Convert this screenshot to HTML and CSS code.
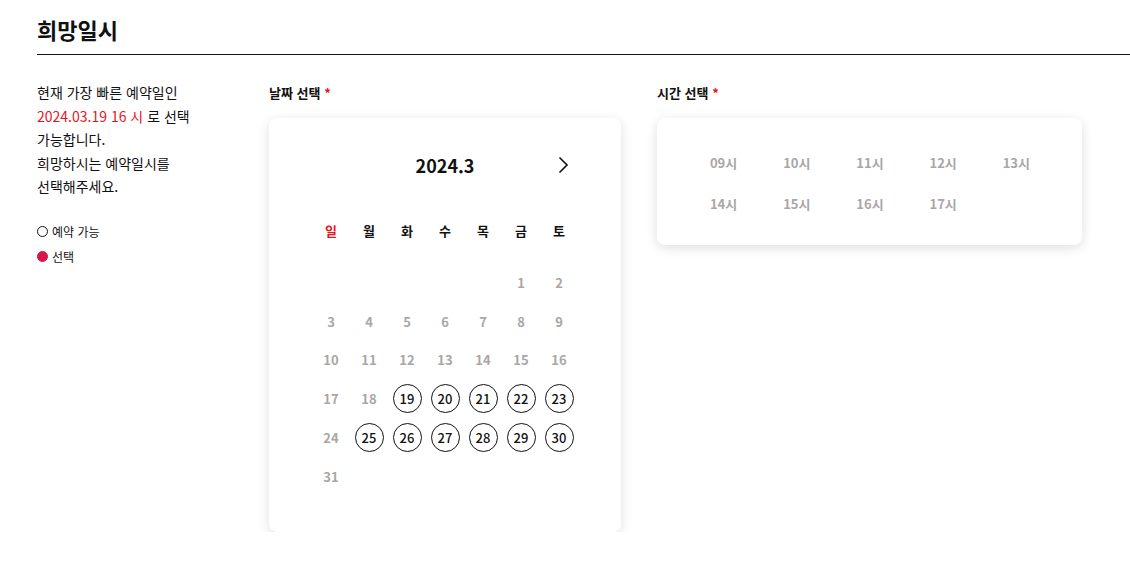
FILE: index.html
```html
<!DOCTYPE html>
<html lang="ko">
<head>
    <meta charset="UTF-8">
    <meta name="viewport" content="width=device-width, initial-scale=1.0">
    <title>희망일시</title>
    <link rel="stylesheet" href="styles.css">
</head>
<body>
    <div class="page">
        <h2 class="title">희망일시</h2>

        <div class="content">
            <div class="info">
                <p class="notice">
                    현재 가장 빠른 예약일인<br>
                    <span class="red">2024.03.19 16 시</span> 로 선택<br>
                    가능합니다.<br>
                    희망하시는 예약일시를<br>
                    선택해주세요.
                </p>
                <ul class="legend">
                    <li><span class="dot"></span>예약 가능</li>
                    <li><span class="dot on"></span>선택</li>
                </ul>
            </div><!--info-->

            <div class="col-date">
                <h3 class="label">날짜 선택 <span class="star">*</span></h3>
                <div class="card calendar">
                    <div class="cal-head">
                        <span></span>
                        <strong class="month">2024.3</strong>
                        <button class="next" aria-label="다음 달">
                            <svg width="20" height="20" viewBox="0 0 20 20"><path d="M6.5 2.5 L14 10 L6.5 17.5" fill="none" stroke="#111" stroke-width="1.6"/></svg>
                        </button>
                    </div>
                    <div class="week">
                        <span class="sun">일</span><span>월</span><span>화</span><span>수</span><span>목</span><span>금</span><span>토</span>
                    </div>
                    <div class="days">
                        <span></span><span></span><span></span><span></span><span></span>
                        <span>1</span><span>2</span>
                        <span>3</span><span>4</span><span>5</span><span>6</span><span>7</span><span>8</span><span>9</span>
                        <span>10</span><span>11</span><span>12</span><span>13</span><span>14</span><span>15</span><span>16</span>
                        <span>17</span><span>18</span><span class="able">19</span><span class="able">20</span><span class="able">21</span><span class="able">22</span><span class="able">23</span>
                        <span>24</span><span class="able">25</span><span class="able">26</span><span class="able">27</span><span class="able">28</span><span class="able">29</span><span class="able">30</span>
                        <span>31</span>
                    </div>
                </div><!--calendar-->
            </div>

            <div class="col-time">
                <h3 class="label">시간 선택 <span class="star">*</span></h3>
                <div class="card times">
                    <span>09시</span><span>10시</span><span>11시</span><span>12시</span><span>13시</span>
                    <span>14시</span><span>15시</span><span>16시</span><span>17시</span>
                </div>
            </div>
        </div><!--content-->
    </div>
</body>
</html>
```

FILE: styles.css
```css
body{
    margin: 0;
    background: #fff;
    color: #111;
    font-family: "Noto Sans CJK KR", "Noto Sans", sans-serif;
}

.page{
    padding-left: 37px;
}

.title{
    margin: 0;
    padding: 13px 0 9px;
    font-size: 22px;
    line-height: 32px;
    font-weight: 700;
    border-bottom: 1px solid #111;
}

.content{
    display: flex;
    margin-top: 26px;
}

.info{
    width: 232px;
}

.notice{
    margin: 0;
    font-size: 14px;
    line-height: 23.6px;
}

.red{
    color: #e8141c;
}

.legend{
    list-style: none;
    margin: 20px 0 0;
    padding: 0;
    font-size: 12px;
    line-height: 25px;
}

.legend li{
    display: flex;
    align-items: center;
    gap: 4px;
}

.dot{
    width: 9px;
    height: 9px;
    border: 1.5px solid #111;
    border-radius: 50%;
}

.dot.on{
    background: #dc1448;
    border-color: #dc1448;
}

.label{
    margin: 0 0 13px;
    font-size: 13px;
    line-height: 24px;
    font-weight: 700;
}

.star{
    color: #e8141c;
}

.card{
    background: #fff;
    border-radius: 8px;
    box-shadow: 0 3px 12px rgba(0, 0, 0, 0.13);
}

.col-date{
    width: 352px;
}

.calendar{
    padding: 32px 43px 34px;
    height: 414px;
    box-sizing: border-box;
}

.cal-head{
    display: grid;
    grid-template-columns: 1fr auto 1fr;
    align-items: center;
    height: 30px;
}

.month{
    font-size: 18px;
    font-weight: 700;
}

.next{
    justify-self: end;
    margin-right: 5px;
    padding: 0;
    border: 0;
    background: none;
    display: flex;
}

.week{
    display: grid;
    grid-template-columns: repeat(7, 38px);
    margin-top: 41px;
    font-size: 13px;
    line-height: 20px;
    font-weight: 700;
    text-align: center;
}

.sun{
    color: #e8141c;
}

.days{
    display: grid;
    grid-template-columns: repeat(7, 38px);
    grid-auto-rows: 38.8px;
    margin-top: 22px;
    font-size: 13px;
    font-weight: 700;
    color: #aaa6a6;
}

.days span{
    display: flex;
    align-items: center;
    justify-content: center;
}

/* 예약 가능한 날짜 */
.days .able{
    width: 29px;
    height: 29px;
    margin: auto;
    box-sizing: border-box;
    border: 1px solid #111;
    border-radius: 50%;
    color: #111;
    font-weight: 500;
}

.col-time{
    margin-left: 36px;
    width: 425px;
}

.times{
    display: grid;
    grid-template-columns: repeat(5, 73.2px);
    grid-auto-rows: 41px;
    padding: 24px 0 20px 30px;
    height: 127px;
    box-sizing: border-box;
    font-size: 13px;
    font-weight: 700;
    color: #aaa6a6;
}

.times span{
    display: flex;
    align-items: center;
    justify-content: center;
}
```
